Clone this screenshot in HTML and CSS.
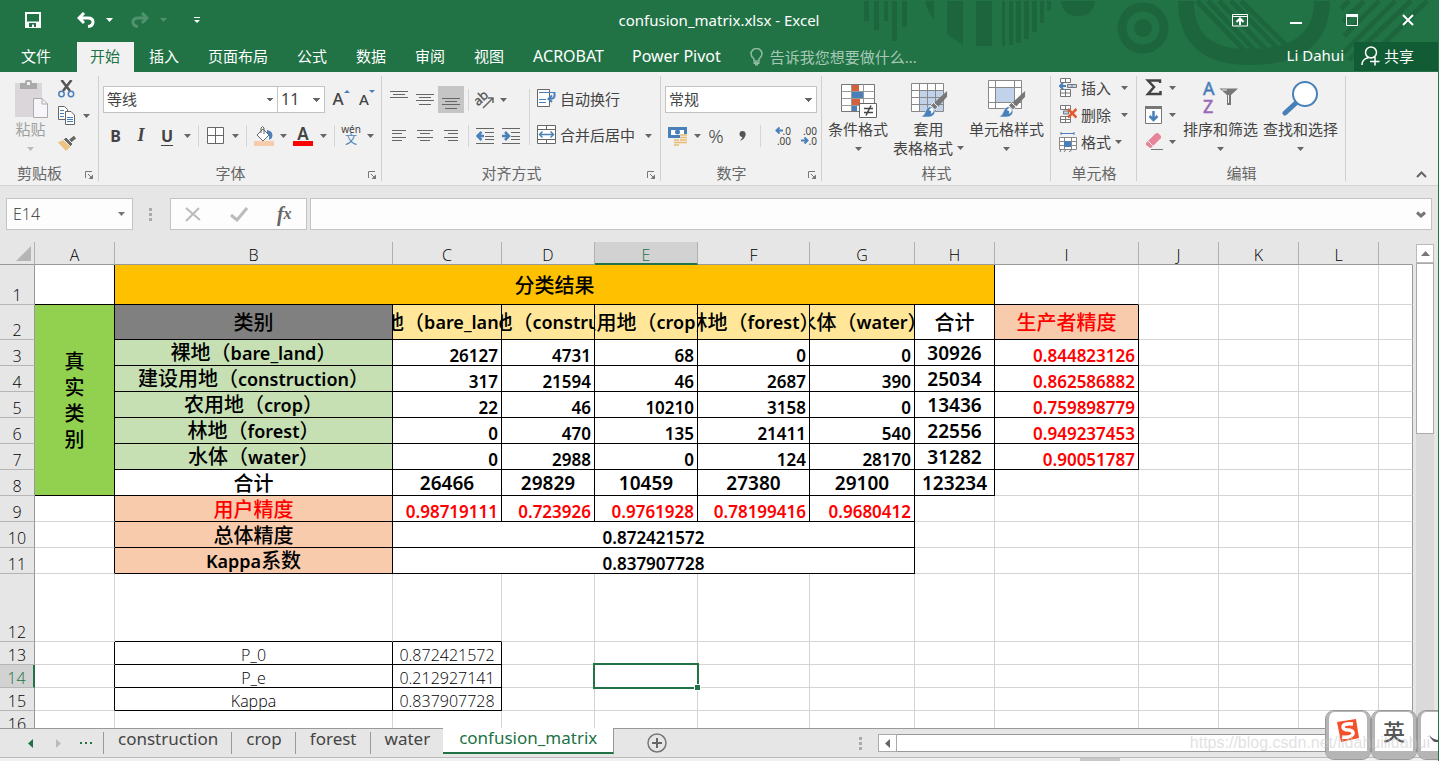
FILE: index.html
```html
<!DOCTYPE html>
<html lang="zh-CN">
<head>
<meta charset="utf-8">
<title>confusion_matrix.xlsx - Excel</title>
<link rel="stylesheet" href="styles.css">
</head>
<body>
<svg class="defs" aria-hidden="true">
  <defs>
    <symbol id="caret" viewBox="0 0 7 4"><path d="M0 0H7L3.500 4Z" fill="currentColor"/></symbol>
    <symbol id="launch" viewBox="0 0 9 9"><path d="M.5 7V.5H7" fill="none" stroke="#777"/><path d="M3 3L7 7" stroke="#777"/><path d="M8 3.500V8H3.500Z" fill="#777"/></symbol>
    <symbol id="brush" viewBox="0 0 28 28"><path d="M27 0V6L18 16L14 12Z" fill="#777"/><path d="M17.500 16.500L13 12L10 15L14.500 19.500Z" fill="#777" stroke="#f1f1f1"/><path d="M13.500 19C16 22 13 27 8 27H0C4 25 4 22 6 18.500C8 15.500 12 16 13.500 19Z" fill="#4a80ba" stroke="#f1f1f1" stroke-width=".6"/><path d="M8 20Q11 16 13 19Q14 22 10 24Q12 20 8 20Z" fill="#fff"/></symbol>
  </defs>
</svg>

<header class="top">
  <svg class="pattern" viewBox="860 0 575 68" aria-hidden="true">
    <g fill="#1d663d">
      <path d="M865 1h5v20h-5zM875 1h5v29h-5zM885 1h4v20h-4zM893 1h5v40h-5zM903 1h5v26h-5zM926 1h9v18Q928 12 926 1z"/>
      <path d="M948 1H964V45Q956 40 948 34zM977 1H993V46H977zM1003 1h3v45h-3zM1010 1h4v44h-4zM1017 1h5v42h-5zM1025 1h5v38h-5zM1033 1h5v31h-5zM1041 1h4v22h-4zM1048 1h4v9h-4z"/>
      <path d="M1062 1H1096Q1094 16 1079 16Q1064 16 1062 1z"/>
      <circle cx="1144" cy="28" r="9"/>
    </g>
    <g fill="none" stroke="#1d663d">
      <circle cx="1144" cy="28" r="21" stroke-width="9"/>
      <path d="M1187 1Q1187 56 1247 57Q1323 58 1323 1" stroke-width="16"/>
      <path d="M1198 1L1252 57M1209 1L1262 57M1220 1L1274 57M1232 1L1283 53M1242 1L1290 48" stroke-width="5"/>
      <path d="M1350 1L1342 9M1365 1L1344 22M1380 1L1345 36M1396 1L1344 53M1412 1L1350 60M1428 1L1368 60" stroke-width="5"/>
    </g>
  </svg>
  <div class="titlebar">
    <div class="quick">
      <button aria-label="保存"><svg width="16" height="16"><path d="M1 1H15V15H1Z" fill="none" stroke="#fff" stroke-width="2"/><path d="M2 9.500H14V15H2Z" fill="#fff"/><path d="M4 11H11V15H9V12.500H7V15H4Z" fill="#217346"/></svg></button>
      <button class="undo" aria-label="撤消"><svg width="18" height="16"><path d="M7 1L2 6L7 11M2 6H11Q16 6 16 10Q16 14 11 14.500" fill="none" stroke="#fff" stroke-width="3"/></svg></button>
      <button class="arr" aria-label="撤消选项"><svg width="7" height="4"><use href="#caret"/></svg></button>
      <button class="redo" aria-label="恢复"><svg width="18" height="16"><path d="M11 1L16 6L11 11M16 6H7Q2 6 2 10Q2 14 7 14.500" fill="none" stroke="#4e9270" stroke-width="3"/></svg></button>
      <button class="arr dim" aria-label="恢复选项"><svg width="7" height="4"><use href="#caret"/></svg></button>
      <button class="custom" aria-label="自定义快速访问工具栏"><svg width="6" height="7"><path d="M0 .5H6" stroke="#fff"/><path d="M0 3H6L3 6Z" fill="#fff"/></svg></button>
    </div>
    <h1>confusion_matrix.xlsx - Excel</h1>
    <div class="window">
      <button aria-label="功能区显示选项"><svg width="16" height="13"><path d="M.5 .5H15.500V12H.5ZM.5 2.500H15.500" fill="none" stroke="#fff"/><path d="M8 11V5M4.500 8L8 4.500L11.500 8" fill="none" stroke="#fff" stroke-width="2"/></svg></button>
      <button aria-label="最小化"><svg width="12" height="12"><path d="M0 9H12" stroke="#fff" stroke-width="2"/></svg></button>
      <button aria-label="最大化"><svg width="12" height="12"><path d="M.5 1V11.500H11.500V1" fill="none" stroke="#fff"/><path d="M0 1.500H12" stroke="#fff" stroke-width="3"/></svg></button>
      <button aria-label="关闭"><svg width="12" height="12"><path d="M1 1L11 11M11 1L1 11" stroke="#fff" stroke-width="2"/></svg></button>
    </div>
  </div>
  <nav class="tabs">
    <button class="file">文件</button>
    <button class="active">开始</button>
    <button>插入</button>
    <button>页面布局</button>
    <button>公式</button>
    <button>数据</button>
    <button>审阅</button>
    <button>视图</button>
    <button class="latin">ACROBAT</button>
    <button class="latin">Power Pivot</button>
    <button class="tell"><svg width="13" height="18"><path d="M4 13V11Q1 8.500 1 6A5.500 5.500 0 0 1 12 6Q12 8.500 9 11V13Z" fill="none" stroke="#8fb9a2" stroke-width="1.500"/><path d="M3.500 14H9.500V16H8V17.500H5V16H3.500Z" fill="#8fb9a2"/></svg>告诉我您想要做什么...</button>
    <span class="user">Li Dahui</span>
    <button class="share"><svg width="19" height="20"><circle cx="10" cy="6.500" r="5.500" fill="none" stroke="#fff" stroke-width="1.500"/><path d="M1 19Q1 13 7.500 11.500M9 15.500H18.500M14 11V19.500" fill="none" stroke="#fff" stroke-width="1.500"/></svg>共享</button>
  </nav>
</header>

<section class="ribbon" aria-label="开始">
  <div class="group clip">
    <div class="body">
      <button class="big paste"><svg width="37" height="39" viewBox="0 0 37 39"><path d="M4 4H29V36H4Z" fill="#dad6da" stroke="#dad6da" stroke-width="2"/><path d="M8 3H13V2Q13 0 15 0H18Q20 0 20 2V3H25V9H8Z" fill="#aaa"/><rect x="15" y="2" width="3" height="3" fill="#f1f1f1"/><path d="M21.500 18.500H30L35.500 24V37.500H21.500Z" fill="#f7f4fa" stroke="#aaa"/><path d="M30 18.500V24H35.500" fill="none" stroke="#aaa"/></svg><span>粘贴</span><svg class="down" width="7" height="4"><use href="#caret"/></svg></button>
      <div class="stack">
        <button aria-label="剪切"><svg width="17" height="18"><path d="M3.500 0L12 11M13.500 0L5 11" stroke="#555" stroke-width="2.500"/><circle cx="3.500" cy="14" r="2.700" fill="none" stroke="#4a80ba" stroke-width="1.500"/><circle cx="13" cy="14" r="2.700" fill="none" stroke="#4a80ba" stroke-width="1.500"/></svg></button>
        <span class="with"><button aria-label="复制"><svg width="17" height="19"><g fill="#fff" stroke="#666"><path d="M.5 .5H6.500L9.500 3.500V13.500H.5Z"/><path d="M7.500 5.500H13L16.500 9V18.500H7.500Z"/></g><path d="M2 4.500H6M2 7.500H6M2 10.500H6M9 11.500H15M9 13.500H15M9 15.500H15" stroke="#4a80ba"/></svg></button><button class="arr" aria-label="复制选项"><svg width="7" height="4"><use href="#caret"/></svg></button></span>
        <button aria-label="格式刷"><svg width="18" height="16"><path d="M17 2L11 7" stroke="#666" stroke-width="3.500"/><path d="M8 2L15 9L12.500 11.500L5.500 4.500Z" fill="#666" stroke="#f1f1f1"/><path d="M5 5L12.500 11.500L8 16L0 7.500Z" fill="#ecc382"/></svg></button>
      </div>
    </div>
    <div class="label"><span>剪贴板</span><button aria-label="剪贴板设置"><svg width="9" height="9"><use href="#launch"/></svg></button></div>
  </div>

  <div class="group font">
    <div class="body rows">
      <div class="line combos">
        <select class="combo" aria-label="字体"><option>等线</option></select>
        <select class="combo size" aria-label="字号"><option>11</option></select>
        <button class="grow" aria-label="增大字号">A<svg width="6" height="3"><path d="M0 3L3 0L6 3Z" fill="#4a80ba"/></svg></button>
        <button class="grow small" aria-label="减小字号">A<svg width="6" height="3"><path d="M0 0L3 3L6 0Z" fill="#4a80ba"/></svg></button>
      </div>
      <div class="line fonttools">
        <button class="b" aria-label="加粗">B</button>
        <button class="i" aria-label="倾斜">I</button>
        <button class="u" aria-label="下划线">U</button>
        <button class="arr" aria-label="下划线选项"><svg width="7" height="4"><use href="#caret"/></svg></button>
        <i class="sep"></i>
        <button aria-label="边框"><svg width="17" height="17"><path d="M.5 .5H16.500V16.500H.5ZM8.500 .5V16.500M.5 8.500H16.500" fill="#fff" stroke="#666"/></svg></button>
        <button class="arr" aria-label="边框选项"><svg width="7" height="4"><use href="#caret"/></svg></button>
        <i class="sep"></i>
        <button aria-label="填充颜色"><svg width="20" height="20"><path d="M3 9L9 3L15 9L9 15Z" fill="#fff" stroke="#666"/><path d="M7 7V2Q8.500 -1 10 2V8" fill="none" stroke="#666"/><path d="M13 4Q20 5 18 12L15 14Q16 8 13 7Z" fill="#4a80ba"/><path d="M0 15H20V20H0Z" fill="#f8cbad"/></svg></button>
        <button class="arr" aria-label="填充选项"><svg width="7" height="4"><use href="#caret"/></svg></button>
        <button class="fc" aria-label="字体颜色">A</button>
        <button class="arr" aria-label="颜色选项"><svg width="7" height="4"><use href="#caret"/></svg></button>
        <i class="sep"></i>
        <button class="wen" aria-label="拼音"><span>wén</span><b>文</b></button>
        <button class="arr" aria-label="拼音选项"><svg width="7" height="4"><use href="#caret"/></svg></button>
      </div>
    </div>
    <div class="label"><span>字体</span><button aria-label="字体设置"><svg width="9" height="9"><use href="#launch"/></svg></button></div>
  </div>

  <div class="group align">
    <div class="body">
      <div class="rows">
        <div class="line aligntools">
          <button aria-label="顶端对齐"><svg width="18" height="20"><path d="M0 1.500H18M3 4.500H15M0 7.500H18" stroke="#666"/></svg></button>
          <button aria-label="垂直居中"><svg width="18" height="20"><path d="M0 4.500H18M3 7.500H15M0 10.500H18M3 14.500H15" stroke="#666"/></svg></button>
          <button class="on" aria-label="底端对齐"><svg width="18" height="20"><path d="M0 8.500H18M3 11.500H15M0 14.500H18M3 18.500H15" stroke="#666"/></svg></button>
          <i class="sep"></i>
          <button aria-label="方向"><svg width="20" height="18"><text x="0" y="12" font-size="13" font-family="Noto Sans" fill="#555" stroke="#555" stroke-width=".3" transform="rotate(-42 6 10)">ab</text><path d="M8 17L18 7M13 7H18V12" fill="none" stroke="#666" stroke-width="1.500"/></svg></button>
          <button class="arr" aria-label="方向选项"><svg width="7" height="4"><use href="#caret"/></svg></button>
        </div>
        <div class="line aligntools">
          <button aria-label="左对齐"><svg width="14" height="11"><path d="M0 .5H14M0 3.500H10M0 7.500H14M0 10.500H10" stroke="#666"/></svg></button>
          <button aria-label="居中"><svg width="16" height="11"><path d="M0 .5H16M3 3.500H13M0 7.500H16M3 10.500H13" stroke="#666"/></svg></button>
          <button aria-label="右对齐"><svg width="14" height="11"><path d="M0 .5H14M4 3.500H14M0 7.500H14M4 10.500H14" stroke="#666"/></svg></button>
          <i class="sep"></i>
          <button aria-label="减少缩进"><svg width="18" height="16"><path d="M0 .5H18M9 4.500H18M9 8.500H18M9 11.500H18M0 15.500H18" stroke="#666"/><path d="M8 8H2M5.500 4L1.500 8L5.500 12" fill="none" stroke="#4a80ba" stroke-width="2.500"/></svg></button>
          <button aria-label="增加缩进"><svg width="18" height="16"><path d="M0 .5H18M9 4.500H18M9 8.500H18M9 11.500H18M0 15.500H18" stroke="#666"/><path d="M0 8H6M3 4L7 8L3 12" fill="none" stroke="#4a80ba" stroke-width="2.500"/></svg></button>
        </div>
      </div>
      <i class="sep tall"></i>
      <div class="rows wraps">
        <div class="line"><button class="txt"><svg width="19" height="19"><path d="M.5 .5H12.500V17.500H.5Z" fill="#fff" stroke="#666"/><path d="M2 3.500H17M2 10.500H9M2 13.500H9" stroke="#4a80ba"/><path d="M17.500 3V7Q17.500 10 12 10M15 6.500L11.500 10L15 13" fill="none" stroke="#4a80ba" stroke-width="2"/></svg>自动换行</button></div>
        <div class="line"><button class="txt"><svg width="19" height="19"><path d="M.5 .5H18.500V18.500H.5ZM.5 4.500H18.500M.5 14.500H18.500M9.500 .5V4.500M9.500 14.500V18.500" fill="#fff" stroke="#666"/><path d="M3 9.500H16M5.500 6.500L2.500 9.500L5.500 12.500M13.500 6.500L16.500 9.500L13.500 12.500" fill="none" stroke="#4a80ba" stroke-width="1.500"/></svg>合并后居中</button><button class="arr" aria-label="合并选项"><svg width="7" height="4"><use href="#caret"/></svg></button></div>
      </div>
    </div>
    <div class="label"><span>对齐方式</span><button aria-label="对齐设置"><svg width="9" height="9"><use href="#launch"/></svg></button></div>
  </div>

  <div class="group number">
    <div class="body rows">
      <div class="line"><select class="combo wide" aria-label="数字格式"><option>常规</option></select></div>
      <div class="line numtools">
        <button aria-label="会计数字格式"><svg width="20" height="20"><path d="M1.500 2.500H17.500V10.500H1.500Z" fill="#fff" stroke="#4a80ba" stroke-width="3"/><circle cx="9.500" cy="6" r="2.500" fill="#4a80ba"/><path d="M12 8H19V18H12ZM6 13H12V19H6Z" fill="#f1f1f1"/><path d="M12 9H19M12 11.500H19M12 14H19M6 14H11M6 16.500H19M6 19H11" stroke="#e8bb73" stroke-width="1.700"/></svg></button>
        <button class="arr" aria-label="货币选项"><svg width="7" height="4"><use href="#caret"/></svg></button>
        <button class="pct" aria-label="百分比样式">%</button>
        <button aria-label="千位分隔样式"><svg width="7" height="10"><circle cx="3.500" cy="3" r="3" fill="#555"/><path d="M6.500 3Q6.500 8 1 10Q4 7 3.500 4Z" fill="#555"/></svg></button>
        <i class="sep"></i>
        <button class="dec" aria-label="增加小数位数"><span><svg width="8" height="7"><path d="M8 3.500H2M4.500 .5L1.500 3.500L4.500 6.500" fill="none" stroke="#4a80ba" stroke-width="2"/></svg>.0</span><span>.00</span></button>
        <button class="dec" aria-label="减少小数位数"><span>.00</span><span><svg width="8" height="7"><path d="M0 3.500H6M3.500 .5L6.500 3.500L3.500 6.500" fill="none" stroke="#4a80ba" stroke-width="2"/></svg>.0</span></button>
      </div>
    </div>
    <div class="label"><span>数字</span><button aria-label="数字设置"><svg width="9" height="9"><use href="#launch"/></svg></button></div>
  </div>

  <div class="group styles">
    <div class="body">
      <button class="big"><svg width="38" height="39"><path d="M2.500 4.500H35.500V31.500H2.500Z" fill="#fff" stroke="#777"/><path d="M2.500 11.500H35.500M2.500 18.500H35.500M2.500 25.500H35.500M12.500 4.500V31M24.500 4.500V31" stroke="#999"/><path d="M13 5H20V11H13ZM13 19H21V25H13Z" fill="#d65f3e"/><path d="M13 12H24V18H13ZM13 26H18V31H13Z" fill="#4a80ba"/><path d="M20.500 23.500H37.500V37.500H20.500Z" fill="#fff" stroke="#666"/><path d="M25 28.500H34M25 32.500H34M32 25.500L27 35.500" stroke="#444" stroke-width="1.500"/></svg><span>条件格式</span><svg class="down" width="7" height="4"><use href="#caret"/></svg></button>
      <button class="big two"><svg width="38" height="39"><path d="M1.500 3.500H33.500V31.500H1.500Z" fill="#fff"/><path d="M10 11H33V31H10Z" fill="#c0d3ea"/><path d="M1.500 3.500H33.500V31.500H1.500ZM1.500 10.500H33.500M1.500 17.500H33.500M1.500 24.500H33.500M9.500 3.500V31M17.500 3.500V31M25.500 3.500V31" fill="none" stroke="#888"/><use href="#brush" x="11" y="11" width="27" height="27"/></svg><span>套用</span><span>表格格式<svg width="7" height="4"><use href="#caret"/></svg></span></button>
      <button class="big"><svg width="38" height="39"><path d="M.5 .5H33.500V28.500H.5ZM.5 7.500H33.500M.5 22.500H33.500M7.500 .5V28.500M26.500 .5V28.500" fill="#fff" stroke="#888"/><path d="M8 8H26V22H8Z" fill="#c0d3ea"/><use href="#brush" x="11" y="11" width="27" height="27"/></svg><span>单元格样式</span><svg class="down" width="7" height="4"><use href="#caret"/></svg></button>
    </div>
    <div class="label"><span>样式</span></div>
  </div>

  <div class="group cells">
    <div class="body stack">
      <button class="txt"><svg width="18" height="19"><g fill="#fff" stroke="#777"><path d="M1.500 .5H11.500V4.500H1.500ZM6.500 .5V4.500"/><path d="M1.500 11.500H11.500V18.500H1.500ZM6.500 11.500V18.500M1.500 15H11.500"/><path d="M8.500 6.500H17.500V9.500H8.500ZM13 6.500V9.500" fill="#c0d3ea"/></g><path d="M7 8H2M4 5L1 8L4 11" fill="none" stroke="#4a80ba" stroke-width="2"/></svg>插入<svg class="far" width="7" height="4"><use href="#caret"/></svg></button>
      <button class="txt"><svg width="18" height="19"><g fill="#fff" stroke="#777"><path d="M1.500 .5H11.500V4.500H1.500ZM6.500 .5V4.500"/><path d="M1.500 11.500H11.500V17.500H1.500ZM6.500 11.500V17.500M1.500 14.500H11.500"/><path d="M4.500 6H9.500V9H4.500Z" fill="#c0d3ea"/></g><path d="M9 4L17.500 12.500M17.500 4L9 12.500" stroke="#e05a30" stroke-width="2.500"/></svg>删除<svg class="far" width="7" height="4"><use href="#caret"/></svg></button>
      <button class="txt"><svg width="18" height="20"><path d="M2 1.500H15M2 0V3M15 0V3" stroke="#4a80ba"/><path d="M.5 5.500H17.500V17.500H.5ZM.5 9.500H17.500M.5 13.500H17.500M5.500 5.500V17.500M12.500 5.500V17.500" fill="#fff" stroke="#888"/><path d="M5 9H12V15H5Z" fill="#4a80ba"/><path d="M2 17.500L1 20M7 17.500L5 20M13 17.500L10 20" stroke="#777"/></svg>格式<svg class="near" width="7" height="4"><use href="#caret"/></svg></button>
    </div>
    <div class="label"><span>单元格</span></div>
  </div>

  <div class="group edit">
    <div class="body">
      <div class="stack">
        <button class="txt" aria-label="自动求和"><svg width="18" height="17"><path d="M15 4V1.500H3L9 8L3 15H15.500V12" fill="none" stroke="#444" stroke-width="2.500"/></svg><svg class="gap" width="7" height="4"><use href="#caret"/></svg></button>
        <button class="txt" aria-label="填充"><svg width="18" height="18"><path d="M.5 .5H16.500V17.500H.5Z" fill="#fff" stroke="#777"/><path d="M0 1.500H17" stroke="#777" stroke-width="3"/><path d="M8.500 5V14M4.500 10L8.500 14L12.500 10" fill="none" stroke="#4a80ba" stroke-width="2.500"/></svg><svg class="gap" width="7" height="4"><use href="#caret"/></svg></button>
        <button class="txt" aria-label="清除"><svg width="18" height="17"><path d="M1 10L10 1Q11 0 13 0L16 3V5L7 14Q5 16 4 14L1 12Z" fill="#e8849a"/><path d="M3 8L8.500 13.500" stroke="#f1f1f1"/><path d="M6 16.500H18" stroke="#777"/></svg><svg class="gap" width="7" height="4"><use href="#caret"/></svg></button>
      </div>
      <button class="big"><svg width="38" height="39"><text x="1" y="15" font-family="Noto Sans" font-size="18" fill="#4a80ba" stroke="#4a80ba" stroke-width=".5">A</text><text x="1" y="33" font-family="Noto Sans" font-size="18" fill="#9a67b8" stroke="#9a67b8" stroke-width=".5">Z</text><path d="M17.500 8.500H36L29 15V25H25V15Z" fill="#777"/><path d="M20 10H25M26.500 15V23" stroke="#f1f1f1"/></svg><span>排序和筛选</span><svg class="down" width="7" height="4"><use href="#caret"/></svg></button>
      <button class="big"><svg width="38" height="39"><path d="M15 22L3 33" stroke="#4a80ba" stroke-width="5" stroke-linecap="round"/><circle cx="23" cy="14" r="12" fill="#fff" stroke="#4a80ba" stroke-width="2"/></svg><span>查找和选择</span><svg class="down" width="7" height="4"><use href="#caret"/></svg></button>
    </div>
    <div class="label"><span>编辑</span></div>
  </div>
  <button class="collapse" aria-label="折叠功能区"><svg width="11" height="7"><path d="M1 6L5.500 1.500L10 6" fill="none" stroke="#666" stroke-width="2"/></svg></button>
</section>

<section class="formula">
  <div class="namebox"><input aria-label="名称框" value="E14"><svg width="7" height="4"><use href="#caret"/></svg></div>
  <svg class="grip" width="3" height="13"><path d="M0 0H3V3H0ZM0 5H3V8H0ZM0 10H3V13H0Z" fill="#aaa"/></svg>
  <div class="fx">
    <button aria-label="取消"><svg width="16" height="15"><path d="M1 1L15 13M14 1L1 14" stroke="#bbb" stroke-width="2"/></svg></button>
    <button aria-label="输入"><svg width="18" height="15"><path d="M1 8L7 13L17 1" fill="none" stroke="#bbb" stroke-width="3"/></svg></button>
    <button class="fn" aria-label="插入函数">f<sub>x</sub></button>
  </div>
  <div class="entry"><input aria-label="编辑栏"><svg width="10" height="7"><path d="M1 1.500L5 5L9 1.500" fill="none" stroke="#777" stroke-width="3"/></svg></div>
</section>

<main class="sheet">
  <div class="viewport">
  <table>
    <colgroup><col class="c-n"><col class="c-80"><col class="c-b"><col class="c-c"><col class="c-d"><col class="c-e"><col class="c-f"><col class="c-g"><col class="c-80"><col class="c-i"><col class="c-80"><col class="c-80"><col class="c-80"><col></colgroup>
    <thead>
      <tr><th class="corner"><svg width="15" height="15"><path d="M15 0V15H0Z" fill="#b5b5b5"/></svg></th><th>A</th><th>B</th><th>C</th><th>D</th><th class="sel">E</th><th>F</th><th>G</th><th>H</th><th>I</th><th>J</th><th>K</th><th>L</th><th class="last"></th></tr>
    </thead>
    <tbody>
      <tr class="r1"><th>1</th><td class="kr kb"></td><td class="k gold cn" colspan="7">分类结果</td><td class="kb"></td><td></td><td></td><td></td><td></td></tr>
      <tr class="r2"><th>2</th><td class="k lime cn vert" rowspan="7">真<br>实<br>类<br>别</td><td class="k gray cn">类别</td>
        <td class="k cream cn"><div>裸地（<span>bare_land</span>）</div></td><td class="k cream cn"><div>建设用地（<span>construction</span>）</div></td><td class="k cream cn"><div>农用地（<span>crop</span>）</div></td><td class="k cream cn"><div>林地（<span>forest</span>）</div></td><td class="k cream cn"><div>水体（<span>water</span>）</div></td>
        <td class="k cn">合计</td><td class="k peach cn red">生产者精度</td><td></td><td></td><td></td><td></td></tr>
      <tr><th>3</th><td class="k green cn">裸地（<span>bare_land</span>）</td><td class="k num">26127</td><td class="k num">4731</td><td class="k num">68</td><td class="k num">0</td><td class="k num">0</td><td class="k total">30926</td><td class="k num red">0.844823126</td><td></td><td></td><td></td><td></td></tr>
      <tr><th>4</th><td class="k green cn">建设用地（<span>construction</span>）</td><td class="k num">317</td><td class="k num">21594</td><td class="k num">46</td><td class="k num">2687</td><td class="k num">390</td><td class="k total">25034</td><td class="k num red">0.862586882</td><td></td><td></td><td></td><td></td></tr>
      <tr><th>5</th><td class="k green cn">农用地（<span>crop</span>）</td><td class="k num">22</td><td class="k num">46</td><td class="k num">10210</td><td class="k num">3158</td><td class="k num">0</td><td class="k total">13436</td><td class="k num red">0.759898779</td><td></td><td></td><td></td><td></td></tr>
      <tr><th>6</th><td class="k green cn">林地（<span>forest</span>）</td><td class="k num">0</td><td class="k num">470</td><td class="k num">135</td><td class="k num">21411</td><td class="k num">540</td><td class="k total">22556</td><td class="k num red">0.949237453</td><td></td><td></td><td></td><td></td></tr>
      <tr><th>7</th><td class="k green cn">水体（<span>water</span>）</td><td class="k num">0</td><td class="k num">2988</td><td class="k num">0</td><td class="k num">124</td><td class="k num">28170</td><td class="k total">31282</td><td class="k num red">0.90051787</td><td></td><td></td><td></td><td></td></tr>
      <tr><th>8</th><td class="k cn">合计</td><td class="k total">26466</td><td class="k total">29829</td><td class="k total">10459</td><td class="k total">27380</td><td class="k total">29100</td><td class="k total">123234</td><td></td><td></td><td></td><td></td><td></td></tr>
      <tr><th>9</th><td class="kr"></td><td class="k peach cn red">用户精度</td><td class="k num red">0.98719111</td><td class="k num red">0.723926</td><td class="k num red">0.9761928</td><td class="k num red">0.78199416</td><td class="k num red">0.9680412</td><td></td><td></td><td></td><td></td><td></td><td></td></tr>
      <tr><th>10</th><td class="kr"></td><td class="k peach cn">总体精度</td><td class="k num mid" colspan="5">0.872421572</td><td></td><td></td><td></td><td></td><td></td><td></td></tr>
      <tr><th>11</th><td class="kr"></td><td class="k peach cn"><span>Kappa</span>系数</td><td class="k num mid" colspan="5">0.837907728</td><td></td><td></td><td></td><td></td><td></td><td></td></tr>
      <tr class="r12"><th>12</th><td></td><td class="kb"></td><td class="kb"></td><td></td><td></td><td></td><td></td><td></td><td></td><td></td><td></td><td></td><td></td></tr>
      <tr class="low"><th>13</th><td class="kr"></td><td class="k thin">P_0</td><td class="k thin">0.872421572</td><td></td><td></td><td></td><td></td><td></td><td></td><td></td><td></td><td></td><td></td></tr>
      <tr class="low"><th class="sel">14</th><td class="kr"></td><td class="k thin">P_e</td><td class="k thin">0.212927141</td><td></td><td class="cursor"><i></i></td><td></td><td></td><td></td><td></td><td></td><td></td><td></td><td></td></tr>
      <tr class="low"><th>15</th><td class="kr"></td><td class="k thin">Kappa</td><td class="k thin">0.837907728</td><td></td><td></td><td></td><td></td><td></td><td></td><td></td><td></td><td></td><td></td></tr>
      <tr class="low"><th>16</th><td></td><td></td><td></td><td></td><td></td><td></td><td></td><td></td><td></td><td></td><td></td><td></td><td></td></tr>
    </tbody>
  </table>
  </div>
  <div class="vscroll"><button aria-label="向上滚动"><svg width="9" height="5"><path d="M0 5L4.500 0L9 5Z" fill="#777"/></svg></button><div class="thumb"></div></div>
</main>

<footer class="bottom">
  <div class="sheetnav"><button aria-label="上一个"><svg width="5" height="9"><path d="M5 0V9L0 4.500Z" fill="#217346"/></svg></button><button aria-label="下一个"><svg width="5" height="9"><path d="M0 0V9L5 4.500Z" fill="#bbb"/></svg></button><button class="more" aria-label="更多工作表"><svg width="13" height="3"><path d="M0 0H2V2H0ZM5 0H7V2H5ZM10 0H12V2H10Z" fill="#217346"/></svg></button></div>
  <div class="sheettabs"><button>construction</button><button>crop</button><button>forest</button><button>water</button><button class="active">confusion_matrix</button></div>
  <button class="add" aria-label="新工作表"><svg width="20" height="20"><circle cx="10" cy="10" r="9" fill="none" stroke="#777" stroke-width="1.500"/><path d="M5 10H15M10 5V15" stroke="#666" stroke-width="2"/></svg></button>
  <svg class="grip" width="3" height="13"><path d="M0 0H3V3H0ZM0 5H3V8H0ZM0 10H3V13H0Z" fill="#aaa"/></svg>
  <div class="hscroll"><button aria-label="向左滚动"><svg width="5" height="9"><path d="M5 0V9L0 4.500Z" fill="#666"/></svg></button><div class="thumb"></div></div>
</footer>
<div class="status"><i></i></div>

<aside class="ime" aria-label="输入法">
  <button aria-label="搜狗"><svg width="24" height="25"><path d="M1 4L20 1L23 20L5 24Z" fill="#f4502a"/><path d="M17 6Q7 5 7 9Q7 12 13 12Q18 13 17 16Q15 20 6 19" fill="none" stroke="#fff" stroke-width="3.500"/></svg></button>
  <button>英</button>
  <button aria-label="半角"><svg width="24" height="24"><path d="M21 2A11 11 0 0 1 1 17A14 14 0 0 0 24 22V2Z" fill="#555"/></svg></button>
</aside>
<p class="watermark">https://blog.csdn.net/lidahuilidahui</p>
</body>
</html>
```
FILE: styles.css
```css
* { box-sizing: border-box; }
body {
  margin: 0;
  height: 100vh;
  display: flex;
  flex-direction: column;
  position: relative;
  overflow: hidden;
  background: #e6e6e6;
  border-right: 1px solid #217346;
  font: 15px/20px "Noto Sans", "Noto Sans CJK SC", sans-serif;
  color: #444;
}
button {
  display: flex;
  align-items: center;
  justify-content: center;
  padding: 0;
  border: 0;
  background: none;
  font: inherit;
  color: inherit;
  white-space: nowrap;
}
svg { display: block; flex: none; }
.defs { position: absolute; width: 0; height: 0; }

/* Title bar and ribbon tabs */
.top { position: relative; background: #217346; color: #fff; flex: none; }
.pattern { position: absolute; right: 4px; top: 0; width: 575px; height: 68px; }
.titlebar { position: relative; display: grid; grid-template-columns: 1fr auto 1fr; align-items: center; height: 42px; padding-bottom: 2px; }
.titlebar h1 { margin: 0; font-size: 15px; font-weight: 400; }
.quick { display: flex; align-items: center; padding-left: 25px; }
.undo { margin-left: 36px; }
.redo { margin-left: 16px; }
.quick .arr { width: 12px; margin-left: 8px; color: #fff; }
.quick .dim { color: #4e9270; }
.custom { margin-left: 25px; }
.window { display: flex; justify-content: flex-end; padding-right: 2px; }
.window button { width: 56px; height: 40px; }
.tabs { position: relative; display: flex; height: 30px; }
.tabs button { padding: 0 14px 3px 15px; }
.tabs .file { width: 77px; padding: 0 26px 2px 21px; }
.tabs .active { background: #f1f1f1; color: #217346; padding: 0 14px 3px 13px; }
.tabs .latin { font-size: 16px; padding-right: 13px; }
.tabs .tell { gap: 7px; color: #a6c9b5; padding-left: 16px; padding-bottom: 0; }
.user { margin-left: auto; padding-right: 10px; line-height: 27px; }
.tabs .share { width: 84px; height: 29px; padding: 0 0 1px 7px; gap: 4px; justify-content: flex-start; background: #115c34; }

/* Ribbon */
.ribbon { display: flex; flex: none; height: 114px; background: #f1f1f1; border-bottom: 1px solid #d2d2d2; }
.group { position: relative; display: flex; flex-direction: column; flex: none; }
.group::after { content: ""; position: absolute; right: 0; top: 4px; bottom: 4px; width: 1px; background: #d0d0d0; }
.body { display: flex; height: 90px; }
.label { display: flex; align-items: center; height: 22px; color: #666; }
.label span { flex: 1; text-align: center; }
.label button { width: 20px; height: 20px; padding-top: 4px; }
.arr, .txt svg[width="7"], .big svg[width="7"] { color: #666; }
.rows { display: flex; flex-direction: column; padding-top: 14px; gap: 9px; }
.line { display: grid; grid-auto-flow: column; align-items: center; justify-content: start; height: 27px; }
.line > button { height: 27px; }
.sep { justify-self: center; width: 1px; height: 22px; background: #d5d5d5; }
.sep.tall { height: 56px; margin: 17px 5px 0 5px; }
.big { flex-direction: column; justify-content: flex-start; padding-top: 8px; }
.big span { line-height: 20px; display: flex; align-items: center; gap: 4px; }
.big .down { margin-top: 8px; }
.stack { display: flex; flex-direction: column; align-items: flex-start; padding-top: 3px; }
.stack > * { height: 27px; }
.txt { gap: 4px; padding-bottom: 2px; }
.with { display: flex; gap: 8px; }
.combo {
  appearance: none;
  height: 27px;
  padding: 0 3px 2px;
  border: 1px solid #c3c3c3;
  border-radius: 0;
  background-color: #fff;
  background-image: linear-gradient(45deg, transparent 50%, #666 50%), linear-gradient(315deg, transparent 50%, #666 50%);
  background-repeat: no-repeat;
  background-size: 4px 4px, 4px 4px;
  background-position: right 7px center, right 3px center;
  font: inherit;
  color: #444;
}

.clip { width: 99px; }
.clip .body { padding-left: 12px; gap: 9px; }
.paste { width: 37px; color: #a0a0a0; }
.big.paste .down { color: #bbb; }
.font { width: 283px; }
.font .body { padding-left: 4px; }
.combos { grid-template-columns: 175px 47px 26px 26px; }
.combos .size { border-left: 0; font-size: 16px; }
.grow { gap: 0; align-items: flex-start; font-size: 17px; font-weight: 500; line-height: 26px; padding-left: 6px; }
.grow svg { margin-top: 4px; }
.small { font-size: 15px; }
.fonttools { grid-template-columns: 25px 26px 26px 14px 8px 26px 14px 8px 27px 13px 26px 14px 8px 26px 12px; }
.fonttools .b, .fonttools .u { font-size: 16px; font-weight: 700; }
.fonttools .i { font: italic 700 18px "Liberation Serif", serif; }
.fonttools .u { text-decoration: underline; text-decoration-thickness: 1px; text-underline-offset: 3px; }
.fonttools .fc { height: 20px; margin: 0 3px; border-bottom: 5px solid #f00; font-size: 17px; font-weight: 600; line-height: 15px; }
.wen { flex-direction: column; color: #444; }
.wen span { font-size: 10px; line-height: 9px; }
.wen b { font-size: 12px; font-weight: 400; line-height: 12px; color: #4a80ba; }
.align { width: 279px; }
.align .body { padding-left: 4px; }
.aligntools { grid-template-columns: 26px 26px 26px 8px 26px 26px; }
.aligntools .arr { justify-self: start; width: 10px; }
.on { background: #c5c5c5; }
.wraps { padding-left: 2px; }
.wraps .arr { margin-left: 10px; }
.number { width: 161px; }
.number .body { padding-left: 4px; }
.wide { width: 152px; }
.numtools { grid-template-columns: 26px 12px 26px 26px 10px 26px 26px; }
.pct { font-size: 19px; font-weight: 300; }
.dec { flex-direction: column; align-items: flex-end; }
.dec span { display: flex; align-items: center; font-size: 10px; line-height: 10px; }
.styles { width: 229px; }
.styles .body { padding-left: 6px; gap: 5px; }
.two span + span { line-height: 18px; }
.cells { width: 86px; }
.cells .body { padding-left: 8px; }
.far { margin-left: 6px; }
.edit { width: 209px; }
.edit .body { padding-left: 8px; gap: 5px; }
.edit .stack { width: 33px; }
.edit .gap { margin-left: 2px; }
.collapse { margin: auto 11px 7px auto; }

/* Formula bar */
.formula { display: flex; align-items: center; flex: none; height: 56px; padding: 0 6px; }
.formula input { width: 100%; min-width: 0; border: 0; padding: 0; outline: 0; background: none; font: 300 16px "Open Sans", sans-serif; color: #333; }
.namebox, .fx, .entry { display: flex; align-items: center; height: 32px; border: 1px solid #c3c3c3; background: #fdfdfd; }
.namebox { width: 127px; padding: 0 7px 0 6px; color: #777; }
.formula .grip { margin: 0 18px 0 16px; }
.fx { width: 137px; justify-content: space-around; }
.fx .fn { font: italic 700 20px "Liberation Serif", serif; color: #666; }
.fx sub { font-size: 16px; line-height: 10px; }
.entry { flex: 1; margin-left: 3px; padding: 0 5px; }

/* Worksheet */
.sheet { display: flex; flex: 1; min-height: 0; }
.viewport { flex: 1; min-width: 0; overflow: hidden; }
table { width: 100%; table-layout: fixed; border-collapse: separate; border-spacing: 0; }
.c-n { width: 35px; }
.c-80 { width: 80px; }
.c-b { width: 278px; }
.c-c { width: 109px; }
.c-d { width: 93px; }
.c-e { width: 103px; }
.c-f { width: 112px; }
.c-g { width: 105px; }
.c-i { width: 144px; }
tr { height: 26px; }
thead tr { height: 23px; }
.r1 { height: 40px; }
.r2 { height: 35px; }
.r12 { height: 68px; }
.low { height: 23px; }
th, td { padding: 0; overflow: hidden; white-space: nowrap; }
th { font: 300 16px/18px "Open Sans", sans-serif; color: #000; background: #e6e6e6; border-right: 1px solid #999; border-bottom: 1px solid #b5b5b5; vertical-align: bottom; }
thead th { border-right-color: #b0b0b0; border-bottom-color: #999; }
thead .sel { background: #d2d2d2; color: #217346; border-bottom: 2px solid #217346; line-height: 16px; }
tbody .sel { background: #d2d2d2; color: #217346; border-right: 2px solid #217346; }
.corner svg { margin: 0 3px 3px auto; }
thead .last { border-right-color: #e6e6e6; }
td { background: #fff; border-right: 1px solid #d4d4d4; border-bottom: 1px solid #d4d4d4; color: #000; text-align: center; }
tbody td:last-child { border-right-color: #999; }
.k { border-color: #000; }
.kr { border-right-color: #000; }
.kb { border-bottom-color: #000; }
.cn { font: 500 20px/22px "Noto Sans CJK SC", sans-serif; }
.cn span { font-family: "Noto Sans", sans-serif; font-size: 18px; font-weight: 600; }
.cn div { display: flex; justify-content: center; }
.vert { line-height: 26px; }
.num, .total { font: 600 17px/18px "Noto Sans", sans-serif; }
.num { text-align: right; vertical-align: bottom; padding-right: 3px; }
.total { font-size: 19px; line-height: 24px; }
.mid { text-align: center; padding: 0; }
.thin { font: 300 16px/18px "Open Sans", sans-serif; vertical-align: bottom; }
.gold { background: #ffc000; }
.lime { background: #92d050; }
.gray { background: #808080; }
.cream { background: #ffe699; }
.green { background: #c6e0b4; }
.peach { background: #f8cbad; }
.red { color: #f00; }
.cursor { position: relative; overflow: visible; }
.cursor i { position: absolute; inset: -2px; border: 2px solid #217346; }
.cursor i::after { content: ""; position: absolute; right: -3px; bottom: -3px; width: 5px; height: 5px; background: #217346; outline: 1px solid #fff; }
.vscroll { width: 25px; flex: none; padding: 2px 4px 0 3px; display: flex; flex-direction: column; background: linear-gradient(#dadada, #dadada) no-repeat 3px 23px / 18px 100%; }
.vscroll button { height: 19px; border: 1px solid #bbb; background: #fff; }
.vscroll .thumb { height: 171px; border: 1px solid #aaa; background: #fff; }

/* Sheet tabs */
.bottom { display: flex; flex: none; height: 30px; border-top: 1px solid #999; border-bottom: 1px solid #bbb; }
.sheetnav { display: flex; align-items: center; gap: 23px; padding-left: 28px; width: 103px; }
.sheetnav .more { margin-left: -4px; }
.sheettabs { display: flex; height: 25px; font-size: 17px; }
.sheettabs button { height: 22px; margin-top: 3px; padding: 0 13px 8px 14px; border-left: 1px solid #999; }
.sheettabs .active { height: 26px; margin-top: -1px; padding: 0 16px 4px; border: 0; border-bottom: 2px solid #217346; border-right: 1px solid #999; background: #fff; color: #217346; }
.add { margin-left: 33px; }
.bottom .grip { margin: 8px 16px 0 auto; }
.hscroll { display: flex; width: 560px; padding: 5px 0; }
.hscroll button { width: 19px; border: 1px solid #aaa; background: #fff; }
.hscroll .thumb { flex: 1; border: 1px solid #999; border-left: 0; background: #fff; }
.status { height: 3px; flex: none; background: #f1f1f1; display: flex; justify-content: flex-end; }
.status i { width: 40px; margin-right: 318px; background: #c8c8c8; }

/* Floating input method bar */
.ime { position: absolute; left: 1326px; bottom: 2px; display: flex; gap: 2px; }
.ime button { width: 44px; height: 48px; border: solid #b5b5b5; border-width: 1px 3px 8px; border-radius: 8px; outline: 1px solid #999; background: #fff; font: 500 22px/24px "Noto Sans CJK SC", sans-serif; color: #555; padding-bottom: 3px; }
.watermark { position: absolute; right: 8px; bottom: 8px; margin: 0; font: 16px/20px "Liberation Sans", sans-serif; color: rgba(200, 200, 200, .55); }
```
